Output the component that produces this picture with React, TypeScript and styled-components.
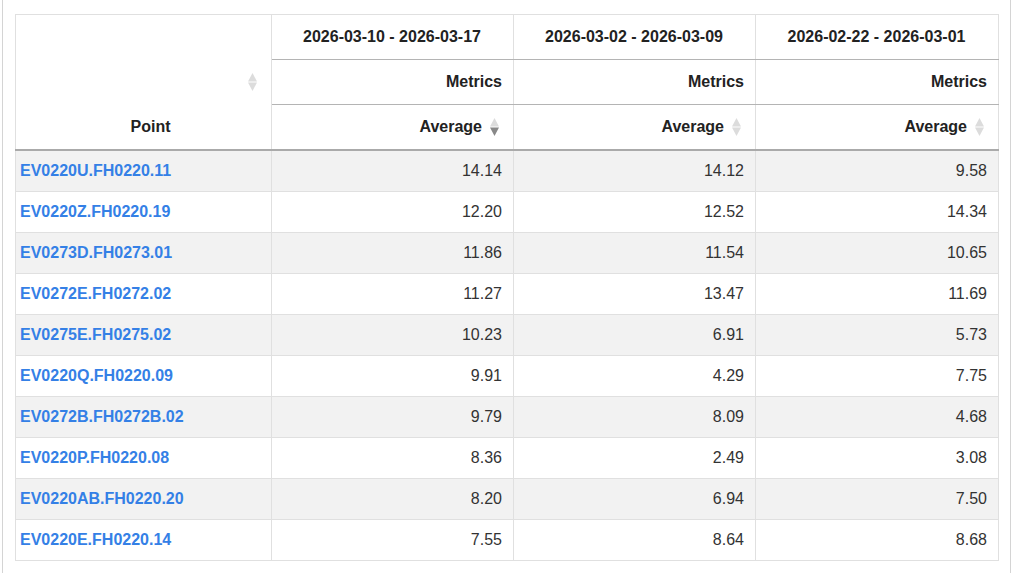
import React from "react";
import styled, { createGlobalStyle } from "styled-components";

const Global = createGlobalStyle`
  html, body { margin: 0; padding: 0; background: #fff; }
  body { font-family: "Liberation Sans", Arial, sans-serif; color: #333; }
`;

const Panel = styled.div`
  margin: 0 2px;
  border-left: 1px solid #d4d4d4;
  border-right: 1px solid #d4d4d4;
  padding: 14px 12px 20px;
  min-height: 573px;
  box-sizing: border-box;
`;

const Table = styled.table`
  width: 983px;
  border-collapse: collapse;
  table-layout: fixed;
  font-size: 16px;
  border-top: 1px solid #e0e0e0;
  border-left: 1px solid #e0e0e0;
  border-right: 1px solid #e0e0e0;
  border-bottom: 1px solid #b4b4b4;
`;

const Th = styled.th<{ $align?: "left" | "center" | "right"; $sort?: boolean; $valign?: string }>`
  position: relative;
  height: 44px;
  padding: 0 ${(p) => (p.$sort ? "31px" : "11px")} 0 10px;
  text-align: ${(p) => p.$align || "right"};
  vertical-align: ${(p) => p.$valign || "middle"};
  font-weight: bold;
  color: #222;
  line-height: 18px;
  border-left: 1px solid #e0e0e0;
  border-right: 1px solid #e0e0e0;
  border-bottom: 1px solid #b4b4b4;
  white-space: nowrap;
`;

const PointTh = styled(Th)`
  padding: 0 10px 13px 24px;
  border-bottom: 2px solid #aaa;
`;

const LastHeadTh = styled(Th)`
  border-bottom: 2px solid #aaa;
`;

const SortIcon = styled.svg`
  position: absolute;
  right: 14px;
  top: 50%;
  margin-top: -9px;
  width: 9px;
  height: 18px;
`;

const Tr = styled.tr<{ $odd: boolean }>`
  background: ${(p) => (p.$odd ? "#f2f2f2" : "#fff")};
`;

const Td = styled.td`
  height: 40px;
  padding: 0 11px 0 4px;
  text-align: right;
  vertical-align: middle;
  color: #333;
  border: 1px solid #e0e0e0;
  white-space: nowrap;
`;

const LinkCell = styled(Td)`
  text-align: left;
`;

const PointLink = styled.a`
  color: #3480e6;
  font-weight: bold;
  text-decoration: none;
`;

function Sort({ state }: { state?: "desc" }) {
  return (
    <SortIcon viewBox="0 0 9 18">
      <polygon points="4.5,0 9,8.6 0,8.6" fill="#dcdcdc" />
      <polygon points="0,9.4 9,9.4 4.5,18" fill={state === "desc" ? "#888" : "#dcdcdc"} />
    </SortIcon>
  );
}

const ranges = ["2026-03-10 - 2026-03-17", "2026-03-02 - 2026-03-09", "2026-02-22 - 2026-03-01"];

const rows: [string, string, string, string][] = [
  ["EV0220U.FH0220.11", "14.14", "14.12", "9.58"],
  ["EV0220Z.FH0220.19", "12.20", "12.52", "14.34"],
  ["EV0273D.FH0273.01", "11.86", "11.54", "10.65"],
  ["EV0272E.FH0272.02", "11.27", "13.47", "11.69"],
  ["EV0275E.FH0275.02", "10.23", "6.91", "5.73"],
  ["EV0220Q.FH0220.09", "9.91", "4.29", "7.75"],
  ["EV0272B.FH0272B.02", "9.79", "8.09", "4.68"],
  ["EV0220P.FH0220.08", "8.36", "2.49", "3.08"],
  ["EV0220AB.FH0220.20", "8.20", "6.94", "7.50"],
  ["EV0220E.FH0220.14", "7.55", "8.64", "8.68"],
];

export default function App() {
  return (
    <>
      <Global />
      <Panel>
        <Table>
          <colgroup>
            <col style={{ width: 256 }} />
            <col style={{ width: 242 }} />
            <col style={{ width: 242 }} />
            <col style={{ width: 243 }} />
          </colgroup>
          <thead>
            <tr>
              <PointTh rowSpan={3} $align="center" $valign="bottom">
                Point
                <Sort />
              </PointTh>
              {ranges.map((r) => (
                <Th key={r} $align="center">
                  {r}
                </Th>
              ))}
            </tr>
            <tr>
              {ranges.map((r) => (
                <Th key={r}>Metrics</Th>
              ))}
            </tr>
            <tr>
              {ranges.map((r, i) => (
                <LastHeadTh key={r} $sort>
                  Average
                  <Sort state={i === 0 ? "desc" : undefined} />
                </LastHeadTh>
              ))}
            </tr>
          </thead>
          <tbody>
            {rows.map((row, i) => (
              <Tr key={row[0]} $odd={i % 2 === 0}>
                <LinkCell>
                  <PointLink href="#">{row[0]}</PointLink>
                </LinkCell>
                <Td>{row[1]}</Td>
                <Td>{row[2]}</Td>
                <Td>{row[3]}</Td>
              </Tr>
            ))}
          </tbody>
        </Table>
      </Panel>
    </>
  );
}
